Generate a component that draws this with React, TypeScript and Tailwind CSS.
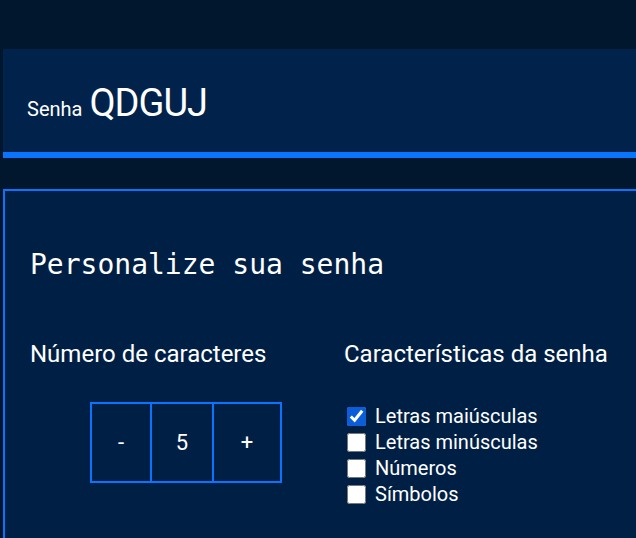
import { useState } from "react";

const options = [
  { id: "upper", label: "Letras maiúsculas" },
  { id: "lower", label: "Letras minúsculas" },
  { id: "numbers", label: "Números" },
  { id: "symbols", label: "Símbolos" },
];

export default function App() {
  const [size, setSize] = useState(5);
  const [checked, setChecked] = useState<Record<string, boolean>>({ upper: true });

  return (
    <div className="min-h-screen overflow-hidden bg-[#00172e] pl-[3px] pt-[49px] font-['Roboto',sans-serif] text-white">
      <div className="w-[720px]">
        <header className="flex h-[109px] items-end border-b-[6px] border-[#0a74ff] bg-[#00224b] px-6 pb-[30px]">
          <span className="mb-[3px] text-[20px] leading-none">Senha</span>
          <span className="ml-[7px] text-[38px] leading-none tracking-[-1px]">QDGUJ</span>
        </header>

        <section className="mt-[31px] h-[400px] border-2 border-[#0a74ff] bg-[#001f45] px-[25px] pt-[60px]">
          <h1 className="font-['DejaVu_Sans_Mono',monospace] text-[28px] leading-none">Personalize sua senha</h1>

          <div className="mt-[63px] flex">
            <div className="w-[314px]">
              <h2 className="text-[24px] leading-none">Número de caracteres</h2>
              <div className="ml-[60px] mt-[36px] flex h-[81px] w-[192px] border-2 border-[#0a74ff] text-[22px]">
                <button type="button" className="flex w-[58px] items-center justify-center" onClick={() => setSize(Math.max(1, size - 1))}>
                  -
                </button>
                <div className="flex w-[64px] items-center justify-center border-x-2 border-[#0a74ff]">{size}</div>
                <button type="button" className="flex flex-1 items-center justify-center" onClick={() => setSize(size + 1)}>
                  +
                </button>
              </div>
            </div>

            <div>
              <h2 className="text-[24px] leading-none">Características da senha</h2>
              <div className="mt-[37px] flex flex-col">
                {options.map((o) => (
                  <label key={o.id} className="flex h-[26px] items-center gap-[9px] text-[20px]">
                    <input
                      type="checkbox"
                      className="m-0 ml-[3px] h-[19px] w-[19px] accent-[#0b5ed7]"
                      checked={!!checked[o.id]}
                      onChange={(e) => setChecked({ ...checked, [o.id]: e.target.checked })}
                    />
                    {o.label}
                  </label>
                ))}
              </div>
            </div>
          </div>
        </section>
      </div>
    </div>
  );
}
